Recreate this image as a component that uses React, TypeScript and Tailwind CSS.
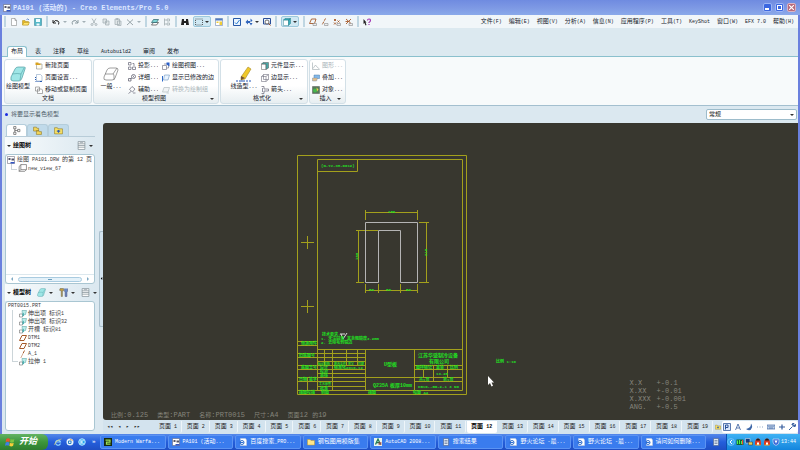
import React from "react";
import clsx from "clsx";

/* CJK runs keep the inherited size, latin runs are set half as wide */
const Label = ({
  text,
  latin = "text-[5px]",
}: {
  text: string;
  latin?: string;
}) => (
  <>
    {text.split(/([\u4e00-\u9fa5]+)/).map((part, i) =>
      i % 2 ? part : part ? (
        <span key={i} className={latin}>
          {part}
        </span>
      ) : null
    )}
  </>
);

const icons: Record<string, React.ReactNode> = {
  newFile: <path d="M3 1h7l3 4v10H3zM10 1v4h3" fill="#fff" stroke="#777" />,
  open: (
    <>
      <path d="M1 5h5l1 2h6v7H1z" fill="#e8b820" stroke="#a98a20" />
      <path d="M1 14l3-5h11l-3 5z" fill="#ffe56b" stroke="#b89220" />
      <path d="M9 3q3-3 5 1" fill="none" stroke="#3a6fc0" strokeWidth="1.5" />
    </>
  ),
  save: (
    <>
      <path d="M1 1h14v14H1z" fill="#55b8c8" stroke="#2b7f92" />
      <path d="M4 2h8v6H4zM5 11h6v4H5z" fill="#effcff" />
    </>
  ),
  undo: <path d="M2 4v6h6M2 10q4-8 10-4q3 3 1 7" fill="none" stroke="#222" strokeWidth="2" />,
  redo: <path d="M14 4v6H8M14 10q-4-8-10-4q-3 3-1 7" fill="none" stroke="#8b9aa0" strokeWidth="2" />,
  cut: (
    <g fill="none" stroke="#a4afb4" strokeWidth="1.7">
      <path d="M4 1l6 10M12 1L6 11" />
      <circle cx="4" cy="13" r="2" />
      <circle cx="12" cy="13" r="2" />
    </g>
  ),
  copy: <path d="M2 2h7v8H2zM7 6h7v8H7z" fill="#dfe5e7" stroke="#a4afb4" strokeWidth="1.5" />,
  paste: <path d="M2 2h9v11H2zM5 1h3v2H5zM7 6h7v9H7z" fill="#dfe5e7" stroke="#a4afb4" strokeWidth="1.5" />,
  remove: <path d="M2 3l12 11M14 3L2 14" stroke="#9aa6ab" strokeWidth="2" />,
  layers: (
    <>
      <path d="M1 14l4-5h10l-4 5z" fill="#fff" stroke="#444" strokeWidth="1.4" />
      <path d="M1 9l4-6h10l-4 6z" fill="#7fd4d4" stroke="#2d6068" strokeWidth="1.4" />
    </>
  ),
  regen: <path d="M3 1v14M3 4h4M3 12h4M8 2h5v4H8zM8 10h5v4H8z" fill="none" stroke="#9aa6ab" strokeWidth="1.4" />,
  find: <path d="M2 2h4v4h4V2h4l2 12h-6v-4H6v4H0z" fill="#222" />,
  select: <path d="M1 2h14v12H1z" fill="none" stroke="#333" strokeWidth="1.5" strokeDasharray="2 2" />,
  props: (
    <>
      <path d="M1 1h14v14H1z" fill="#fff" stroke="#54709c" />
      <path d="M1 1h14v4H1z" fill="#517bc0" />
      <path d="M3 7h4v3H3zM9 7h5v7H9z" fill="#f1cc36" />
    </>
  ),
  view: (
    <>
      <path d="M1 1h14v14H1z" fill="#eaf5ff" stroke="#2759a8" strokeWidth="2" />
      <path d="M4 9l3 3 6-8" fill="none" stroke="#2d7cd0" strokeWidth="2" />
    </>
  ),
  swap: <path d="M1 8l5-5v3h4v4H6v3zM15 5l-4-4v8zM9 10l3 5 3-5z" fill="#2f64bb" />,
  zoom: (
    <>
      <path d="M1 1h14v11H1z" fill="#e9f3ff" stroke="#2a4e98" strokeWidth="2" />
      <circle cx="8" cy="8" r="4" fill="#fff" stroke="#444" strokeWidth="1.5" />
      <path d="M11 11l4 4" stroke="#a05420" strokeWidth="2" />
    </>
  ),
  box: (
    <>
      <path d="M1 4h10v11H1z" fill="#fff" stroke="#3c8c98" />
      <path d="M1 4l3-3h11l-4 3zM15 1v10l-4 4V4z" fill="#35aebb" stroke="#2b7f88" />
    </>
  ),
  plane: <path d="M1 13L6 3h9l-5 10z" fill="none" stroke="#a65a2a" strokeWidth="2" />,
  planeTag: (
    <>
      <path d="M1 11L5 2h9l-3 9z" fill="none" stroke="#a65a2a" strokeWidth="1.8" />
      <path d="M8 11h7v4H8z" fill="#eee" stroke="#777" />
    </>
  ),
  axis: <path d="M11 1L8 7M7 9l-1 2M5 13l-1 2" stroke="#a65a2a" strokeWidth="2" />,
  axisTag: (
    <>
      <path d="M9 1L2 14" stroke="#a65a2a" strokeWidth="2" strokeDasharray="5 2" />
      <path d="M7 11h7v4H7z" fill="#eee" stroke="#777" />
    </>
  ),
  pointTag: (
    <>
      <path d="M2 2l4 4M6 2L2 6M9 5l4 4M13 5L9 9M2 9l4 4M6 9l-4 4" stroke="#a65a2a" strokeWidth="1.8" />
      <path d="M8 11h7v4H8z" fill="#eee" stroke="#777" />
    </>
  ),
  csysTag: (
    <>
      <path d="M2 2l10 9M12 2L2 12M1 7h8" stroke="#a65a2a" strokeWidth="1.8" />
      <path d="M8 11h7v4H8z" fill="#eee" stroke="#777" />
    </>
  ),
  help: (
    <>
      <path d="M1 2l6 7H5l2 5-2 1-2-5-2 2z" fill="#222" />
      <path d="M9 5q0-3 3-3t3 3q0 2-3 4v1M12 12v2" fill="none" stroke="#a238b4" strokeWidth="2.4" />
    </>
  ),
  solid: (
    <>
      <path d="M1 11l4-8q1-2 3-2h6q2 0 1 2l-3 9q-1 3-3 3H3q-3 0-2-4z" fill="#9fe6e6" stroke="#3e8d93" strokeWidth=".6" />
      <path d="M2 8q6-1 9 0l3-6M11 8l-1 6" fill="none" stroke="#4f9da2" strokeWidth=".6" />
    </>
  ),
  wire: (
    <path
      d="M1 11l3-7q1-2 3-2h6q2 0 2 2l-3 8q-1 2-3 2H3q-3 0-2-3zM2 8h8q1 0 1 2v4M10 8l4-6"
      fill="#fff"
      stroke="#777"
      strokeWidth=".7"
    />
  ),
  sheetView: <path d="M5 1h10v9l-3 3H2V5zM5 1v9h10M5 10l-3 3" fill="#fff" stroke="#666" strokeWidth="1.2" />,
  pencil: (
    <>
      <path d="M5 11l7-10 3 2-6 10-4 1z" fill="#f0c829" stroke="#a68a2a" strokeWidth=".6" />
      <path d="M5 10l4 2-4 2z" fill="#735238" />
      <path d="M0 15h2M3 15h6M10 15h2M13 15h2" stroke="#2356b8" strokeWidth="1" />
    </>
  ),
  newPage: (
    <>
      <path d="M3 4h11v10H3z" fill="#fffdf0" stroke="#777" />
      <path d="M1 1h6v2h4v3H1z" fill="#d9a21e" />
    </>
  ),
  pageSetup: (
    <>
      <path d="M3 1h8l3 3v10H3z" fill="#fff" stroke="#7595bb" />
      <path d="M1 15h2M5 15h2M9 15h5M1 6v2M1 10v2" stroke="#285ab0" strokeWidth="2" />
    </>
  ),
  movePage: <path d="M1 2h8v8H1zM5 6h8l2 2v7H5z" fill="#fff" stroke="#777" strokeWidth="1.2" />,
  project: <path d="M1 1h5v5H1zM1 10h5v5H1zM9 10h6v5H9zM9 3h3v5" fill="none" stroke="#667" strokeWidth="1.4" />,
  detail: (
    <g fill="none" stroke="#556" strokeWidth="1.4">
      <circle cx="11" cy="5" r="4" />
      <path d="M8 8l-3 2M1 9h5v5H1zM10 3l2 4" />
    </g>
  ),
  helper: <path d="M8 1l6 5-5 6-6-5zM1 15l5-4M10 14h5" fill="none" stroke="#667" strokeWidth="1.4" />,
  drawView: (
    <>
      <path d="M1 7h8v8H1zM4 4h9v8H9" fill="#fff" stroke="#667" strokeWidth="1.2" />
      <path d="M9 1h6v8L9 5z" fill="#2a5fc8" />
    </>
  ),
  edited: (
    <>
      <path d="M5 2h10l-3 10H3z" fill="#e9f4ff" stroke="#6d93bd" strokeWidth="1.2" />
      <path d="M1 4v11" stroke="#2d69c8" strokeWidth="2" />
    </>
  ),
  convert: <path d="M4 3h11l-3 9H1zM9 14h5" fill="#f2f4f5" stroke="#b6bec2" strokeWidth="1.4" />,
  part: (
    <>
      <path d="M1 4h9v11H1z" fill="#fff" stroke="#555" />
      <path d="M1 4l3-3h11v11l-5 3V4z" fill="#4aa7a5" stroke="#555" />
    </>
  ),
  edge: <path d="M1 5h9v10H1zM1 5l4-4h10v10l-5 4M10 5l5-4M5 1v10h10" fill="none" stroke="#667" strokeWidth="1.1" />,
  arrowEnd: <path d="M1 1h5v5h9v4H6v5H1M3 4v8" fill="none" stroke="#667" strokeWidth="1.4" />,
  graph: <path d="M1 1v14h14M2 13l5-7 3 4 5 4" fill="none" stroke="#aab4b9" strokeWidth="1.4" />,
  overlay: (
    <>
      <path d="M4 2h11v7H4z" fill="#84b9e9" stroke="#4c7fae" />
      <path d="M1 8h10l-2 6H1z" fill="#e5c08a" stroke="#8092a6" />
    </>
  ),
  object: (
    <>
      <path d="M1 1h14v14H1z" fill="#587b58" stroke="#555" />
      <circle cx="6" cy="9" r="4" fill="#45b84d" />
      <path d="M9 3l4 4-3 4z" fill="#e9d24b" />
    </>
  ),
  cube: (
    <>
      <path d="M6 1h9l-2 8-6 1z" fill="#bdecea" stroke="#4a9a9a" />
      <path d="M1 8h6v6H1z" fill="#fff" stroke="#555" />
      <path d="M7 8l3-3v6l-3 3z" fill="#4db3b3" />
    </>
  ),
  tree: <path d="M3 1h4v4H3zM3 11h4v4H3zM10 6h4v4h-4zM5 5v6M5 8h5" fill="#fff" stroke="#555" strokeWidth="1.2" />,
  folders: <path d="M1 2h5l1 2h3v5H1zM6 8h4l1 2h4v5H6z" fill="#f3d65a" stroke="#8b7422" />,
  favorites: (
    <>
      <path d="M1 3h5l1 2h8v9H1z" fill="#f8e164" stroke="#8b7422" />
      <path d="M8 7v5M5 9h6" stroke="#2c59b0" strokeWidth="2" />
    </>
  ),
  list: <path d="M2 1h12v14H2zM2 5h12M2 8h12M2 11h12M5 3h6" fill="#fff" stroke="#77868e" strokeWidth="1.2" />,
  tools: (
    <>
      <path d="M2 1h6v4H6v10H4V5L1 4z" fill="#c9a13c" stroke="#665" />
      <path d="M10 1v5l1 1v8h3V7l1-1V1" fill="#6a8fc9" stroke="#447" />
    </>
  ),
  drawing: (
    <>
      <path d="M1 1h14v14H1z" fill="#fff" stroke="#556" />
      <path d="M3 4h4v4H3zM9 5h5v4H9z" fill="#556" />
      <path d="M7 12h8v3H7z" fill="#3155c4" />
    </>
  ),
  game: (
    <>
      <path d="M0 0h16v16H0z" fill="#16290f" />
      <path d="M3 4h9v4H5v4h8" fill="none" stroke="#9bdf55" strokeWidth="2.5" />
    </>
  ),
  page: (
    <>
      <path d="M3 1h10l2 3v11H3z" fill="#fff" stroke="#c5ced8" />
      <circle cx="6" cy="9" r="4" fill="none" stroke="#2f6fcf" strokeWidth="2" />
      <path d="M2 9h7" stroke="#2f6fcf" strokeWidth="2" />
    </>
  ),
  folder: <path d="M1 3h5l2 2h7v9H1z" fill="#ffe68a" stroke="#c29a2a" />,
  cad: (
    <>
      <path d="M0 0h16v16H0z" fill="#e9f5ee" />
      <path d="M3 13L8 2l5 11M5 9h6" fill="none" stroke="#1f7a56" strokeWidth="2.5" />
      <path d="M9 8h6v6H9z" fill="#a33" opacity=".6" />
    </>
  ),
  flag: (
    <>
      <path d="M2 3q3-2 6 0L7 8Q4 6 1 8z" fill="#e8552f" />
      <path d="M9 3q3 2 6 0l-1 5q-3 2-6 0z" fill="#7cc443" />
      <path d="M1 9q3-2 6 0l-1 5q-3-2-6 0z" fill="#3f7fe8" />
      <path d="M8 9q3 2 6 0l-1 5q-3 2-6 0z" fill="#f8cf3a" />
    </>
  ),
  ie: (
    <g fill="none" stroke="#8fd3ff" strokeWidth="2.2">
      <path d="M13 11a5 5 0 1 1 0-3H4" />
      <path d="M1 14Q2 5 15 2" stroke="#f4d35a" strokeWidth="1.2" />
    </g>
  ),
  browser: (
    <>
      <circle cx="8" cy="8" r="7" fill="#e7f3fb" />
      <path d="M5 6h5v5H5z" fill="none" stroke="#2d7fc4" strokeWidth="2" />
      <path d="M8 2l5 3" stroke="#e5a055" strokeWidth="2" />
    </>
  ),
  kugou: (
    <>
      <circle cx="8" cy="8" r="6.5" fill="#26a8ef" stroke="#bfeaff" strokeWidth="2" />
      <path d="M6 4v8M11 4L7 8l4 4" fill="none" stroke="#fff" strokeWidth="2" />
    </>
  ),
  penguin: (
    <>
      <path d="M2 14Q1 1 8 1t6 13z" fill="#d93a22" />
      <path d="M4 5q0-4 4-4t4 4z" fill="#202020" />
      <path d="M6 9h4v5H6z" fill="#fff" />
      <path d="M3 13h10v2H3z" fill="#f0a52b" />
    </>
  ),
  monitor: (
    <>
      <path d="M1 1h9v9H1z" fill="#153a7a" stroke="#eee" />
      <path d="M7 8h8v6H7z" fill="#e9cc55" stroke="#333" />
    </>
  ),
  signal: (
    <>
      <path d="M1 3h14v11H1z" fill="#163" />
      <path d="M3 5v7M7 4v8M11 6v6" stroke="#4ef04e" strokeWidth="2" />
      <path d="M13 4v9" stroke="#e43" strokeWidth="2" />
    </>
  ),
  shield: (
    <>
      <path d="M2 2h12v6q0 5-6 7q-6-2-6-7z" fill="#3a69d8" stroke="#fff" />
      <path d="M5 5h6l-3 6z" fill="#fff" />
    </>
  ),
  chevron: (
    <>
      <circle cx="8" cy="8" r="7" fill="#3aa6f2" stroke="#9fd9ff" />
      <path d="M10 4L6 8l4 4" fill="none" stroke="#fff" strokeWidth="2" />
    </>
  ),
  doc: <path d="M3 1h10v14H3zM5 5h6M5 8h6M5 11h6" fill="#dfe9f5" stroke="#4c5f86" strokeWidth="1.2" />,
  ime: (
    <>
      <path d="M1 1h14v14H1z" fill="#dce9fc" stroke="#355c9d" strokeWidth="1.6" />
      <path d="M5 13V4h5v5H5" fill="none" stroke="#2b5297" strokeWidth="2" />
    </>
  ),
  letter: <path d="M3 14L8 2l5 12M5 10h6" fill="none" stroke="#355c9d" strokeWidth="1.6" />,
  moon: <path d="M12 1q0 9-10 11q9 6 12-3q1-4-2-8z" fill="#3d67a8" />,
  dots: <path d="M2 8h2M7 8h2M12 8h2" stroke="#8fa7c6" strokeWidth="2" />,
  keyboard: <path d="M0 4h16v8H0zM3 7h2M7 7h2M11 7h2M4 10h8" fill="#bfd0e8" stroke="#355c9d" strokeWidth="1.3" />,
  plus: <path d="M8 3v10M2 8h12" stroke="#355c9d" strokeWidth="2.4" />,
  wrench: <path d="M2 14l7-7M8 3l5 5q3-2 2-5l-3 2-2-2 2-2q-4-1-4 2z" fill="#355c9d" stroke="#355c9d" strokeWidth="2" />,
};

const Icon = ({ name, className = "size-2" }: { name: string; className?: string }) => (
  <svg viewBox="0 0 16 16" className={clsx("shrink-0", className)} aria-hidden="true">
    {icons[name]}
  </svg>
);

const Caret = ({ className = "fill-[#333]" }: { className?: string }) => (
  <svg viewBox="0 0 4 4" className={clsx("size-1 shrink-0", className)} aria-hidden="true">
    <path d="M0 1h4L2 3z" />
  </svg>
);

const TitleBar = () => (
  <header className="flex h-[15px] items-center bg-linear-to-b from-[#6f8be0] via-[#7d98e4] to-[#8aa9ea] pr-1 pl-[3px]">
    <Icon name="drawing" />
    <h1 className="flex-1 pl-0.5 text-[7px] leading-3 font-bold whitespace-pre text-[#dde7ff]">
      PA101 (活动的) - Creo Elements/Pro 5.0
    </h1>
    <div className="flex gap-[3px]">
      <button aria-label="最小化" className="flex size-[9px] items-end rounded-[2px] border border-[#9cb5f5] bg-[#3b67e0] p-px">
        <span className="h-0.5 w-1 bg-white" />
      </button>
      <button aria-label="最大化" className="size-[9px] rounded-[2px] border border-[#9cb5f5] bg-[#3b67e0] p-px">
        <span className="block size-full border border-white" />
      </button>
      <button aria-label="关闭" className="size-[9px] rounded-[2px] border border-[#dab4c4] bg-[#b86a7c] p-px">
        <svg viewBox="0 0 5 5" className="size-full">
          <path d="M0 0l5 5M5 0L0 5" stroke="#fff" strokeWidth="1.2" />
        </svg>
      </button>
    </div>
  </header>
);

const Separator = () => <span className="h-[11px] w-0.5 bg-[#bfd6e2]" />;

const Tool = ({ name, title, menu, off }: { name: string; title: string; menu?: boolean; off?: boolean }) => (
  <button
    title={title}
    aria-label={title}
    className={clsx("flex items-center", off ? "gap-[3px]" : "gap-0.5")}
  >
    <Icon name={name} />
    {menu && <Caret className={off ? "fill-[#a3b0b6]" : "fill-[#333]"} />}
  </button>
);

const pressed = "flex h-[11px] items-center rounded-xs border border-[#9cc9dc] bg-[#cfe8f3] px-px";

const menus = [
  "文件(F)", "编辑(E)", "视图(V)", "分析(A)", "信息(N)", "应用程序(P)",
  "工具(T)", "KeyShot", "窗口(W)", "EFX 7.0", "帮助(H)",
];

const Toolbar = () => (
  <div className="flex h-[13px] items-center justify-between bg-[#f1f6f9] pr-1 pl-0.5">
    <div className="flex items-center gap-1">
      <Separator />
      <Tool name="newFile" title="新建" />
      <Tool name="open" title="打开" />
      <Tool name="save" title="保存" />
      <Separator />
      <Tool name="undo" title="撤消" menu off />
      <Tool name="redo" title="重做" menu off />
      <Tool name="cut" title="剪切" />
      <Tool name="copy" title="复制" />
      <Tool name="paste" title="粘贴" />
      <Tool name="remove" title="删除" menu off />
      <Separator />
      <Tool name="layers" title="层" />
      <Tool name="regen" title="再生" />
      <Separator />
      <Tool name="find" title="查找" />
      <div className={pressed}>
        <Tool name="select" title="选择" menu />
      </div>
      <Tool name="props" title="属性" />
      <Separator />
      <Tool name="view" title="重画" />
      <Tool name="swap" title="更新" menu />
      <Tool name="zoom" title="缩放" />
      <Separator />
      <div className={pressed}>
        <Tool name="box" title="着色" menu />
      </div>
      <Separator />
      <Tool name="planeTag" title="基准平面" />
      <Tool name="axisTag" title="基准轴" />
      <Tool name="pointTag" title="基准点" />
      <Tool name="csysTag" title="坐标系" />
      <Separator />
      <Tool name="help" title="上下文帮助" />
    </div>
    <nav className="flex gap-[7px] whitespace-pre">
      {menus.map((menu) => (
        <button key={menu}>
          <Label text={menu} />
        </button>
      ))}
    </nav>
  </div>
);

const ribbonTabs = ["布局", "表", "注释", "草绘", "Autobuild2", "审阅", "发布"];

const RibbonTabs = () => (
  <div role="tablist" className="mt-[18px] flex gap-1 border-b border-[#8ac0cd] pl-[5px]">
    {ribbonTabs.map((tab, i) => (
      <button
        key={tab}
        role="tab"
        aria-selected={i === 0}
        className={clsx(
          "-mb-px h-[11px] rounded-t-[3px] border border-b-0 px-[3px]",
          i === 0 ? "border-[#8ac0cd] bg-white" : "border-transparent"
        )}
      >
        <Label text={tab} />
      </button>
    ))}
  </div>
);

type Command = { icon: string; text: string; off?: boolean };

const Commands = ({ items, className }: { items: Command[]; className: string }) => (
  <div className={clsx("flex flex-col gap-[3px] overflow-hidden", className)}>
    {items.map(({ icon, text, off }) => (
      <button
        key={text}
        disabled={off}
        className={clsx("flex h-[9px] items-center gap-0.5 whitespace-nowrap", off && "text-[#a9b4b9]")}
      >
        <Icon name={icon} />
        <span>
          <Label text={text} />
        </span>
      </button>
    ))}
  </div>
);

const BigCommand = ({ icon, text }: { icon: string; text: string }) => (
  <button className="flex w-[26px] flex-col items-center gap-px pt-[5px] whitespace-nowrap">
    <Icon name={icon} className="size-4" />
    <span>
      <Label text={text} />
    </span>
  </button>
);

const Group = ({
  title,
  more,
  className,
  children,
}: {
  title: string;
  more?: boolean;
  className: string;
  children: React.ReactNode;
}) => (
  <section
    className={clsx(
      "flex flex-col rounded-[3px] border border-[#d3e0e7] bg-linear-to-b from-white from-60% to-[#e7eef1]",
      className
    )}
  >
    <div className="flex flex-1 pt-px">{children}</div>
    <h2 className="flex h-[10px] items-center px-1">
      <span className="flex-1 text-center">{title}</span>
      {more && <Caret />}
    </h2>
  </section>
);

const Ribbon = () => (
  <div className="flex h-[49px] gap-px border-b border-[#a3bfcf] bg-[#f7fafb] px-0.5 pt-0.5 pb-px">
    <Group title="文档" className="w-[88px]">
      <BigCommand icon="solid" text="绘图模型" />
      <Commands
        className="flex-1 pl-1"
        items={[
          { icon: "newPage", text: "新建页面" },
          { icon: "pageSetup", text: "页面设置..." },
          { icon: "movePage", text: "移动或复制页面" },
        ]}
      />
    </Group>
    <Group title="模型视图" more className="w-[126px]">
      <div className="pl-1">
        <BigCommand icon="wire" text="一般..." />
      </div>
      <Commands
        className="w-[34px] pl-1"
        items={[
          { icon: "project", text: "投影..." },
          { icon: "detail", text: "详细..." },
          { icon: "helper", text: "辅助..." },
        ]}
      />
      <Commands
        className="flex-1 pl-1"
        items={[
          { icon: "drawView", text: "绘图视图..." },
          { icon: "edited", text: "显示已修改的边" },
          { icon: "convert", text: "转换为绘制组", off: true },
        ]}
      />
    </Group>
    <Group title="格式化" more className="w-[88px]">
      <div className="pl-2.5">
        <BigCommand icon="pencil" text="线造型..." />
      </div>
      <Commands
        className="flex-1 pl-1"
        items={[
          { icon: "part", text: "元件显示..." },
          { icon: "edge", text: "边显示..." },
          { icon: "arrowEnd", text: "箭头..." },
        ]}
      />
    </Group>
    <Group title="插入" more className="w-[37px]">
      <Commands
        className="flex-1 pl-0.5"
        items={[
          { icon: "graph", text: "图形...", off: true },
          { icon: "overlay", text: "叠加..." },
          { icon: "object", text: "对象..." },
        ]}
      />
    </Group>
  </div>
);

const MessageBar = () => (
  <div className="flex h-[17px] items-center justify-between bg-[#dbe8f0] pr-px pl-[3px] text-[#52626c]">
    <p className="flex items-center gap-[3px]">
      <span className="size-[3px] rounded-full bg-[#1a2be0]" />
      将要显示着色模型
    </p>
    <div className="flex h-[11px] w-[91px] items-center rounded-xs border border-[#9dbccb] bg-white px-0.5">
      <select aria-label="过滤器" className="h-2 flex-1 appearance-none text-[#222]">
        <option>常规</option>
      </select>
      <Caret />
    </div>
  </div>
);

const TreeHeader = ({ title, children }: { title: string; children: React.ReactNode }) => (
  <div className="flex h-[17px] items-center gap-0.5 bg-linear-to-r from-[#f8fbfc] to-[#dbe8f0] px-0.5 text-black">
    <Caret />
    <h2 className="flex-1 font-bold whitespace-nowrap">{title}</h2>
    {children}
  </div>
);

const TreeMenu = ({ icon, title }: { icon: string; title: string }) => (
  <button aria-label={title} className="flex items-center gap-[3px] pl-1">
    <Icon name={icon} className="size-[9px]" />
    <Caret />
  </button>
);

const features = [
  { icon: "cube", text: "伸出项 标识1" },
  { icon: "cube", text: "伸出项 标识32" },
  { icon: "cube", text: "开槽 标识81" },
  { icon: "plane", text: "DTM1" },
  { icon: "plane", text: "DTM2" },
  { icon: "axis", text: "A_1" },
  { icon: "cube", text: "拉伸 1" },
];

const Sidebar = () => (
  <aside className="flex w-[101px] shrink-0 bg-[#dbe8f0]">
    <div className="flex min-w-0 flex-1 flex-col pl-[3px]">
      <div className="flex h-[14px] items-end border-b border-[#b8ccd8] pl-px">
        {["tree", "folders", "favorites"].map((name, i) => (
          <button
            key={name}
            aria-label={["模型树", "文件夹浏览器", "收藏夹"][i]}
            className={clsx(
              "flex h-3 w-[21px] items-center justify-center rounded-t-[3px] border border-b-0 border-[#b4cddb]",
              i === 0 ? "bg-white" : "bg-[#c0daea]"
            )}
          >
            <Icon name={name} className="size-[9px]" />
          </button>
        ))}
      </div>
      <TreeHeader title="绘图树">
        <TreeMenu icon="list" title="显示" />
      </TreeHeader>
      <div className="flex flex-1 flex-col rounded-[3px] border border-[#a9c6d2] bg-white text-[#3b3b3b]">
        <ul className="flex-1 pt-px pl-px whitespace-pre">
          <li className="flex items-center gap-0.5">
            <Icon name="drawing" />
            <span>
              <Label text="绘图 PA101.DRW 的第 12 页" />
            </span>
          </li>
          <li className="ml-1 flex items-center gap-px">
            <span className="-mt-1 h-1.5 w-1.5 border-b border-l border-[#ccd5d9]" />
            <Icon name="sheetView" className="size-[9px]" />
            <Label text="new_view_67" />
          </li>
        </ul>
        <div className="flex h-[9px] items-center gap-1 border-t border-[#dce8ee] px-1">
          <Caret className="rotate-90 fill-[#7fa9c4]" />
          <div className="flex h-[5px] flex-1 items-center justify-center rounded-full border border-[#a9cbe0] bg-[#e3f1f9]">
            <span className="h-px w-1 bg-[#6b9dbd]" />
          </div>
          <Caret className="-rotate-90 fill-[#7fa9c4]" />
        </div>
      </div>
      <TreeHeader title="模型树">
        <TreeMenu icon="solid" title="模型" />
        <TreeMenu icon="tools" title="设置" />
        <TreeMenu icon="list" title="显示" />
      </TreeHeader>
      <div className="mb-[3px] flex-1 rounded-[3px] border border-[#a9c6d2] bg-white pl-0.5 text-[#3b3b3b]">
        <Label text="PRT0015.PRT" />
        <ul className="ml-1 whitespace-pre">
          {features.map(({ icon, text }, i) => (
            <li key={text} className="flex h-2 items-center gap-px">
              <span
                className={clsx(
                  "w-1.5 border-l border-[#ccd5d9]",
                  i === features.length - 1 ? "h-1 self-start border-b" : "h-2"
                )}
              />
              <Icon name={icon} />
              <span>
                <Label text={text} />
              </span>
            </li>
          ))}
        </ul>
      </div>
    </div>
    <div className="flex w-2 flex-col justify-center pl-1">
      <button
        aria-label="折叠导航器"
        className="flex h-24 items-center justify-center rounded-l-xs border border-r-0 border-[#a9bfcc] bg-[#d3e3ee]"
      >
        <Caret className="size-[3px] rotate-90" />
      </button>
    </div>
  </aside>
);

const sheetNotes: [number, number, number, string][] = [
  [322, 336, 4, "技术要求:"],
  [321, 340, 4, "1. 未注圆角"],
  [347, 340, 4, "其余粗糙度3.2mm"],
  [321, 344, 4, "2. 去除毛刺锐边"],
  [301, 345, 4, "借通用件"],
  [299, 357, 4, "旧底图号"],
  [301, 369, 4, "底图总号"],
  [299, 381, 4, "日期"],
  [309, 381, 4, "签字"],
  [318, 365, 3, "标记处数"],
  [334, 365, 3, "更改文件"],
  [348, 365, 3, "签字"],
  [358, 365, 3, "日期"],
  [320, 369, 4, "设计"],
  [334, 369, 4, "标准化2010-12"],
  [320, 373, 4, "校对"],
  [320, 377, 4, "审核"],
  [319, 385, 3, "工艺审查"],
  [320, 390, 4, "批准"],
  [416, 369, 4, "图样标记"],
  [436, 369, 4, "重量"],
  [450, 369, 4, "比例"],
  [436, 375, 4, "13.28"],
  [419, 381, 4, "共1页"],
  [443, 381, 4, "第1页"],
  [384, 366, 5, "U型板"],
  [373, 387, 5, "Q235A"],
  [390, 387, 5, "板厚10mm"],
  [418, 357, 5, "江苏华盛制冷设备"],
  [429, 363, 5, "有限公司"],
  [418, 388, 4, "CB10--BG-2-1 3 NO"],
  [299, 394, 4, "描图校描"],
  [321, 394, 4, "制图"],
  [368, 394, 4, "描图"],
  [413, 394, 4, "幅面 A4"],
  [496, 363, 4, "比例 1:10"],
];

const Drawing = () => (
  <svg
    viewBox="103 123 695 297"
    className="absolute top-0 left-0 h-[297px] w-[695px]"
    fill="none"
    role="img"
    aria-label="PA101"
  >
    <g stroke="#a3a01c">
      {/* sheet border */}
      <path d="M297.5 155.5h169v239h-169zM317.5 159.5h145v231h-165M317.5 159.5v231M317.5 171.5h40v-12" />
      <path d="M301 242.5h13M307.5 236v13M301 306.5h13M307.5 300v13" />
      {/* side column */}
      <path d="M297.5 341.5h20M297.5 345.5h20M297.5 353.5h20M297.5 357.5h20M297.5 365.5h20M297.5 369.5h20M297.5 377.5h20M297.5 381.5h20M307.5 377.5v13" />
      {/* title block */}
      <path d="M317.5 349.5h145M317.5 353.5h48M317.5 357.5h48M317.5 361.5h48M317.5 365.5h48M317.5 369.5h48M317.5 373.5h48M317.5 377.5h97M317.5 381.5h48M317.5 386.5h48" />
      <path d="M324.5 349.5v16M332.5 349.5v41M346.5 349.5v16M357.5 349.5v16M365.5 349.5v41M414.5 349.5v41" />
      <path d="M414.5 365.5h48M414.5 369.5h48M414.5 377.5h48M414.5 381.5h48M423.5 369.5v8M433.5 365.5v16M447.5 365.5v12" />
      {/* dimensions */}
      <path d="M365.5 212.5h52M365.5 210v10M417.5 210v10M426.5 222.5v60M419 222.5h10M419 282.5h10" />
      <path d="M358.5 230.5v52M356 230.5h22M356 282.5h8M365.5 290.5h52M365.5 284v9M378.5 284v9M400.5 284v9M417.5 284v9" />
    </g>
    <path d="M365.5 282.5v-60h52v60h-17v-52h-22v52z" stroke="#b4b4b4" />
    <path d="M341 334l2 5 4-6M340 334h5" stroke="#ddd" />
    <g fill="#22e022" className="font-bold">
      <text x="321" y="167" fontSize="4">(N-YJ-XM-0012)</text>
      <text x="388" y="213" fontSize="4">180</text>
      <text x="369" y="291" fontSize="4">50</text>
      <text x="386" y="291" fontSize="4">80</text>
      <text x="406" y="291" fontSize="4">50</text>
      <text transform="rotate(-90 358 260)" x="358" y="260" fontSize="4">180</text>
      <text transform="rotate(-90 427 256)" x="427" y="256" fontSize="4">210</text>
      {sheetNotes.map(([x, y, size, text]) => (
        <text key={`${x}-${y}`} x={x} y={y} fontSize={size}>
          {text}
        </text>
      ))}
    </g>
    <path d="M488 376v9l2-2 1.500 3.500 1.500-.8-1.500-3.200h2.500z" fill="#fff" />
  </svg>
);

const tolerances = [
  ["X.X", "+-0.1"],
  ["X.XX", "+-0.01"],
  ["X.XXX", "+-0.001"],
  ["ANG.", "+-0.5"],
];

const Canvas = () => (
  <main className="relative flex flex-1 flex-col justify-end rounded-l-[3px] bg-[#38372f] text-[#85847b]">
    <Drawing />
    <dl className="mr-28 grid grid-cols-[27px_auto] self-end text-[7px] leading-[8px]">
      {tolerances.map(([name, value]) => (
        <React.Fragment key={name}>
          <dt>{name}</dt>
          <dd>{value}</dd>
        </React.Fragment>
      ))}
    </dl>
    <p className="flex gap-[9px] pl-2 text-[6px] leading-[9px] whitespace-pre">
      {["比例:0.125", "类型:PART", "名称:PRT0015", "尺寸:A4", "页面12 的19"].map((item) => (
        <span key={item}>
          <Label text={item} latin="text-[7px]" />
        </span>
      ))}
    </p>
  </main>
);

const PageTabs = () => (
  <div className="flex h-[14px] items-center bg-[#d3e3ee] text-[#222]">
    <div className="flex w-[52px] items-center gap-[5px] pl-1 text-[5px]">
      {["◂◂", "◂", "▸", "▸▸"].map((arrow) => (
        <button key={arrow}>{arrow}</button>
      ))}
    </div>
    <div role="tablist" className="flex flex-1 justify-between">
      {Array.from({ length: 19 }, (_, i) => i + 1).map((page) => (
        <button
          key={page}
          role="tab"
          aria-selected={page === 12}
          className={clsx(
            "h-3 rounded-b-xs border-r px-1 whitespace-pre",
            page === 12 ? "border-white bg-white font-bold text-black" : "border-[#eef5f9]"
          )}
        >
          <Label text={`页面 ${page}`} />
        </button>
      ))}
    </div>
    <div className="flex w-[85px] items-center gap-px pl-0.5">
      <Icon name="favorites" className="size-1.5" />
      <div className="flex h-3 flex-1 items-center justify-around rounded-xs bg-white">
        {["ime", "letter", "moon", "dots", "keyboard", "plus", "wrench"].map((name) => (
          <Icon key={name} name={name} />
        ))}
      </div>
    </div>
  </div>
);

const tasks = [
  { icon: "game", text: "Modern Warfa..." },
  { icon: "drawing", text: "PA101 (活动..." },
  { icon: "page", text: "百度搜索_PRO..." },
  { icon: "folder", text: "钢包图用模版集" },
  { icon: "cad", text: "AutoCAD 2008..." },
  { icon: "doc", text: "搜索结果" },
  { icon: "page", text: "野火论坛 -最..." },
  { icon: "page", text: "野火论坛 -最..." },
  { icon: "page", text: "请问如何删除..." },
];

const Taskbar = () => (
  <footer className="flex h-4 items-stretch bg-linear-to-b from-[#5588ea] via-[#245edb] to-[#1f4fc4] text-white">
    <button className="flex w-12 items-center gap-1 rounded-r-md bg-linear-to-b from-[#63b363] via-[#3c963c] to-[#2f7d2f] pl-[5px] text-[9px] leading-3 font-bold italic">
      <Icon name="flag" className="size-[10px]" />
      开始
    </button>
    <div className="flex w-[52px] items-center gap-1 pl-1.5">
      <Icon name="ie" />
      <Icon name="browser" />
      <Icon name="kugou" />
      <span className="pl-0.5">»</span>
    </div>
    <div className="flex flex-1 gap-0.5 py-px">
      {tasks.map(({ icon, text }, i) => (
        <button
          key={i}
          className="flex min-w-0 flex-1 items-center gap-[3px] overflow-hidden rounded-xs border border-[#5b93f3] bg-[#3a7cee] pl-[3px] whitespace-pre"
        >
          <Icon name={icon} />
          <span>
            <Label text={text} />
          </span>
        </button>
      ))}
    </div>
    <div className="flex w-5 items-center pl-1.5">
      <Icon name="doc" />
    </div>
    <div className="flex w-[74px] items-center gap-px border-l border-[#0d4fb0] bg-linear-to-b from-[#3fb2f4] to-[#1285dd] pr-1">
      <Icon name="chevron" />
      {["signal", "monitor", "penguin", "penguin", "shield"].map((name, i) => (
        <Icon key={i} name={name} />
      ))}
      <time className="ml-auto text-[5px]">13:44</time>
    </div>
  </footer>
);

const App = () => {
  return (
    <div className="flex min-h-screen flex-col bg-[#5e79dc] font-['Liberation_Mono','Noto_Sans_CJK_SC',monospace] text-[6px] leading-[8px] text-[#14202a]">
      <TitleBar />
      <div className="flex flex-1 flex-col border-x-2 border-[#6a80de] bg-[#dce9f0]">
        <Toolbar />
        <RibbonTabs />
        <Ribbon />
        <MessageBar />
        <div className="flex flex-1">
          <Sidebar />
          <div className="flex min-w-0 flex-1 flex-col">
            <Canvas />
            <PageTabs />
          </div>
        </div>
      </div>
      <Taskbar />
    </div>
  );
};

export default App;
